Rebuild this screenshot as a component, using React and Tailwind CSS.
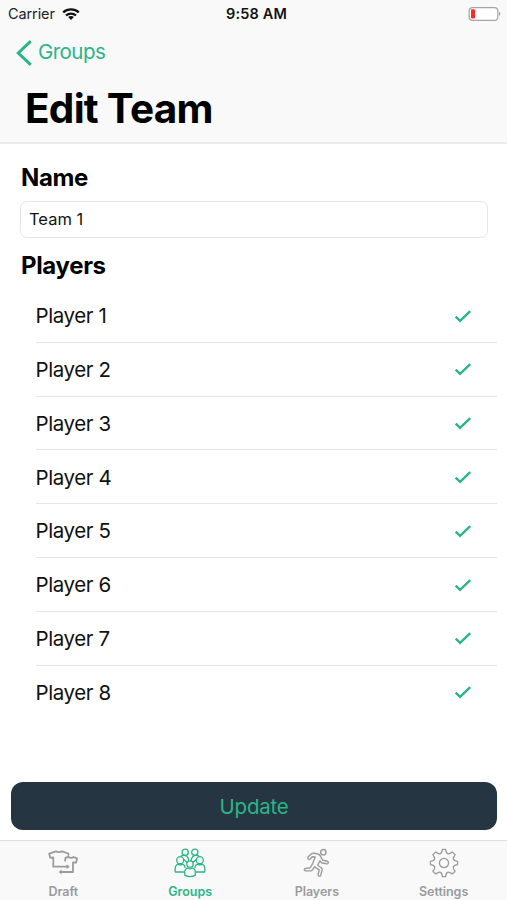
import { useState } from 'react';

const initialPlayers = [1, 2, 3, 4, 5, 6, 7, 8].map((n) => ({
  id: n,
  name: `Player ${n}`,
  selected: true,
}));

function WifiIcon() {
  return (
    <svg width="18" height="13" viewBox="0 0 18 13" fill="none" stroke="#111" strokeWidth="2.3">
      <path d="M1.2 4.4C5.5 .4 12.5 .4 16.8 4.4" />
      <path d="M4 7.5C6.8 4.9 11.2 4.9 14 7.5" />
      <path d="M9 11.9L6.1 9.1C7.7 7.7 10.3 7.7 11.9 9.1Z" fill="#111" stroke="none" />
    </svg>
  );
}

function BatteryIcon() {
  return (
    <svg width="33" height="15" viewBox="0 0 33 15" fill="none">
      <rect x="1.2" y=".6" width="28.6" height="12.7" rx="3.4" fill="#fff" stroke="#a5a5a7" strokeWidth="1.2" />
      <rect x="3" y="2.3" width="4" height="9.3" rx="1" fill="#fb2b20" />
      <path d="M31 4.7C32.8 5.3 32.8 8.3 31 8.9Z" fill="#a5a5a7" />
    </svg>
  );
}

function DraftIcon() {
  return (
    <svg width="30" height="26" viewBox="0 0 30 26" fill="none" stroke="currentColor" strokeWidth="1.8" strokeLinejoin="round">
      <path d="M21 16.7H5.3V7.5L2.2 7.8L1.2 3.6L8 1.3C9.5 2.4 12.5 2.4 14 1.3L20.3 3.5L20.4 5.8" />
      <path d="M17 11.5L17.6 7.6L20.7 7C22 8.1 24.5 8.1 25.6 7L29 8.4L28.2 12.7L25 12.3V22H12.5" />
      <path d="M18.8 14.8L21.3 16.7L18.8 18.6Z" fill="currentColor" strokeWidth=".5" />
      <path d="M13.5 20.1L11 22L13.5 23.9Z" fill="currentColor" strokeWidth=".5" />
    </svg>
  );
}

function GroupsIcon() {
  return (
    <svg width="32" height="30" viewBox="0 0 32 30" fill="none" stroke="currentColor" strokeWidth="1.3" strokeLinecap="round" strokeLinejoin="round">
      <circle cx="11.2" cy="4.2" r="3.1" />
      <circle cx="20.8" cy="4.2" r="3.1" />
      <circle cx="6.2" cy="12.2" r="3.5" />
      <circle cx="25.8" cy="12.2" r="3.5" />
      <circle cx="16" cy="16" r="3.2" />
      <path d="M7.1 8.1C8.6 7 13.2 6.6 14.5 10.7L14.8 12.3" />
      <path d="M24.9 8.1C23.4 7 18.8 6.6 17.5 10.7L17.2 12.3" />
      <path d="M9.8 24H1.3C.8 20 1.6 16.8 4.1 16.1C5.4 17 7 17 8.3 16.1C9.9 16.4 10.8 17.7 11.1 19.3" />
      <path d="M22.2 24H30.7C31.2 20 30.4 16.8 27.9 16.1C26.6 17 25 17 23.7 16.1C22.1 16.4 21.2 17.7 20.9 19.3" />
      <path d="M13.6 19.8C15 21 17 21 18.4 19.8C21 20.6 21.7 23.8 21.1 27.4C18 28.8 14 28.8 10.9 27.4C10.3 23.8 11 20.6 13.6 19.8Z" />
      <path d="M10 11.8L13 14.3M22 11.8L19 14.3" />
    </svg>
  );
}

function RunnerIcon() {
  return (
    <svg width="28" height="30" viewBox="0 0 28 30" fill="none" stroke="currentColor" strokeWidth="1.4" strokeLinejoin="round">
      <circle cx="20.3" cy="4.2" r="2.7" />
      <path d="M5.2 8.8L8.5 5.8Q9.3 5.2 10.4 5.3L14.3 5.7Q17 6.4 17.8 8.8L19.5 12L24.1 13.2Q25.8 13.9 25 15.3Q24.5 16 23.4 15.8L18.5 14.8L16.8 12.8L14.7 17.2L18.3 19.7Q19.4 20.6 19.1 22L17.7 27.4Q17.2 28.6 16 28.2Q14.8 27.8 15.1 26.5L16.2 21.9L11.5 18.8L9.5 21.8Q8.8 22.9 7.5 22.9L2.7 22.8Q1.2 22.6 1.4 21.3Q1.6 20.2 3 20.2L6.8 20.1L9.5 15.8L12.2 9L9.4 8.8L7.2 11Q6 11.9 5.1 10.9Q4.3 10 5.2 8.8Z" />
    </svg>
  );
}

function GearIcon() {
  return (
    <svg width="30" height="30" viewBox="-15 -15 30 30" fill="none" stroke="currentColor" strokeWidth="1.3" strokeLinejoin="round">
      <circle r="4.6" />
      <path d="M-1.6 -13.6H1.6Q2 -9.8 4.1 -9.2Q5.6 -9 8.2 -11.1L11.1 -8.2Q9 -5.6 9.2 -4.1Q9.8 -2 13.6 -1.6V1.6Q9.8 2 9.2 4.1Q9 5.6 11.1 8.2L8.2 11.1Q5.6 9 4.1 9.2Q2 9.8 1.6 13.6H-1.6Q-2 9.8 -4.1 9.2Q-5.6 9 -8.2 11.1L-11.1 8.2Q-9 5.6 -9.2 4.1Q-9.8 2 -13.6 1.6V-1.6Q-9.8 -2 -9.2 -4.1Q-9 -5.6 -11.1 -8.2L-8.2 -11.1Q-5.6 -9 -4.1 -9.2Q-2 -9.8 -1.6 -13.6Z" />
    </svg>
  );
}

const tabs = [
  { id: 'draft', label: 'Draft', Icon: DraftIcon },
  { id: 'groups', label: 'Groups', Icon: GroupsIcon },
  { id: 'players', label: 'Players', Icon: RunnerIcon },
  { id: 'settings', label: 'Settings', Icon: GearIcon },
];

export default function App() {
  const [teamName, setTeamName] = useState('Team 1');
  const [players, setPlayers] = useState(initialPlayers);
  const [activeTab, setActiveTab] = useState('groups');

  const togglePlayer = (id) => {
    setPlayers(players.map((p) => (p.id === id ? { ...p, selected: !p.selected } : p)));
  };

  return (
    <div className="flex h-screen w-full flex-col overflow-hidden bg-white font-['Inter',sans-serif] text-black">
      {/* Header */}
      <header className="h-[144px] shrink-0 border-b-2 border-[#ebebeb] bg-[#f9f9f9]">
        <div className="grid h-7 grid-cols-3 items-center pl-2 pr-1.5">
          <div className="flex items-center gap-[7px] text-[14.5px] tracking-[-0.1px] text-[#222]">
            Carrier
            <WifiIcon />
          </div>
          <span className="pb-px pl-1 text-center text-[14.5px] font-semibold tracking-[0.15px] text-[#111]">9:58 AM</span>
          <div className="flex justify-end">
            <BatteryIcon />
          </div>
        </div>

        <button className="flex h-[49px] items-center gap-1.5 pl-4 text-[20.5px] tracking-[-0.55px] text-[#2bb588]">
          <svg width="16" height="26" viewBox="0 0 16 26" fill="none" stroke="currentColor" strokeWidth="3">
            <path d="M14.8 1.2L2.3 13L14.8 24.8" />
          </svg>
          Groups
        </button>

        <h1 className="pl-[25px] pt-[3px] text-[40.5px] font-bold leading-[58px] tracking-[-0.75px]">Edit Team</h1>
      </header>

      {/* Form */}
      <main className="flex min-h-0 flex-1 flex-col">
        <div className="px-5 pt-[19px]">
          <h2 className="pl-px text-2xl font-bold leading-[30px] tracking-[-0.35px]">Name</h2>
          <input
            type="text"
            value={teamName}
            onChange={(e) => setTeamName(e.target.value)}
            className="mt-2 block h-[37px] w-[468px] rounded-[7px] border border-[#e6e6e6] bg-white px-2 pb-0.5 text-[16.5px] text-[#111] outline-none"
          />
          <h2 className="mt-[13px] pl-px text-2xl font-bold leading-[30px] tracking-[-0.35px]">Players</h2>
        </div>

        <ul className="mt-2 pl-[35.5px] pr-[10px]">
          {players.map((player) => (
            <li
              key={player.id}
              onClick={() => togglePlayer(player.id)}
              className="flex h-[53.8px] items-center justify-between border-b border-[#e6e6e6] pr-[25px] pt-[2.5px] text-[20.5px] tracking-[-0.4px] text-[#111] last:border-transparent"
            >
              {player.name}
              {player.selected && (
                <svg width="18" height="14" viewBox="0 0 18 14" fill="none" stroke="#2bb588" strokeWidth="2.4">
                  <path d="M1.7 6.7L6.1 10.9L16.2 1.2" />
                </svg>
              )}
            </li>
          ))}
        </ul>

        <button className="ml-[11px] mr-[10px] mb-[10px] mt-auto h-[48px] rounded-xl bg-[#253642] pt-0.5 text-[20.5px] tracking-[-0.25px] text-[#2bb588]">
          Update
        </button>
      </main>

      {/* Tab bar */}
      <nav className="grid h-[60px] shrink-0 grid-cols-4 border-t border-[#dedede] bg-[#f9f9f9]">
        {tabs.map(({ id, label, Icon }) => (
          <button
            key={id}
            onClick={() => setActiveTab(id)}
            className={`flex flex-col items-center ${activeTab === id ? 'text-[#2bb588]' : 'text-[#9b9b9b]'}`}
          >
            <span className="flex h-[43px] items-center">
              <Icon />
            </span>
            <span className="text-[12.5px] font-semibold leading-[15px] tracking-[-0.05px]">{label}</span>
          </button>
        ))}
      </nav>
    </div>
  );
}
